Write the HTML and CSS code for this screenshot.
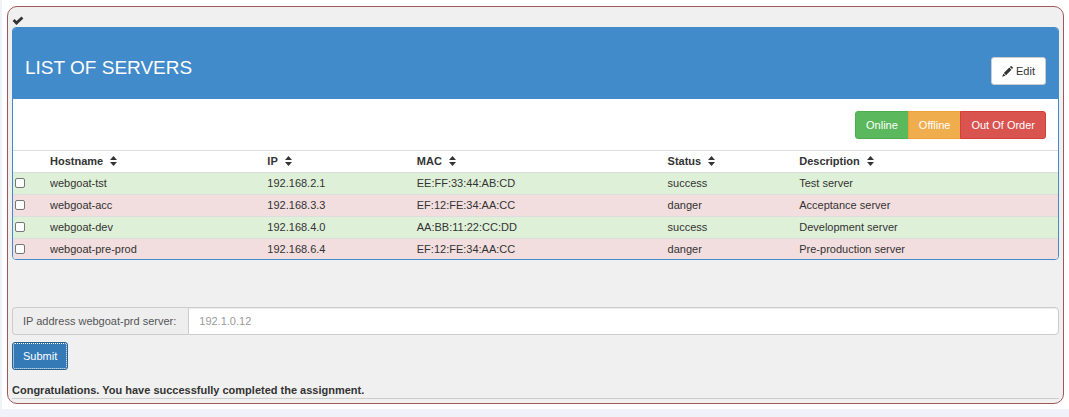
FILE: index.html
```html
<!DOCTYPE html>
<html lang="en">
<head>
<meta charset="utf-8">
<title>List of servers</title>
<link rel="stylesheet" href="styles.css">
</head>
<body>
<svg class="defs" aria-hidden="true">
  <symbol id="sort" viewBox="0 0 7 10"><path d="M3.5 0L7 4H0zM0 6h7L3.5 10z"/></symbol>
</svg>
<main class="page">
  <section class="attack">
    <div class="solved">
      <svg class="check" viewBox="0 0 12 9" aria-label="Solved"><path d="M1.6 4L4.5 7L10.4 1.5" fill="none" stroke="currentColor" stroke-width="2.8"/></svg>
    </div>
    <div class="panel">
      <header class="panel-header">
        <h1 class="title">LIST OF SERVERS</h1>
        <button class="btn btn-edit" type="button">
          <svg class="pencil" viewBox="0 0 12 12" aria-hidden="true"><path d="M8.6 1.1L9.4.4Q10.1-.1 10.7.4L11.6 1.3Q12.1 1.9 11.6 2.6L10.9 3.4zM7.9 1.7L10.3 4.1L4.4 10L2 7.6zM1.5 8.2L3.8 10.5L.2 11.8z"/></svg>
          Edit
        </button>
      </header>
      <div class="toolbar">
        <div class="group">
          <button class="btn online" type="button">Online</button>
          <button class="btn offline" type="button">Offline</button>
          <button class="btn broken" type="button">Out Of Order</button>
        </div>
      </div>
      <table class="servers">
        <colgroup><col class="c-check"><col class="c-host"><col class="c-ip"><col class="c-mac"><col class="c-status"><col></colgroup>
        <thead>
          <tr>
            <td></td>
            <th scope="col">Hostname <svg class="sort"><use href="#sort"/></svg></th>
            <th scope="col">IP <svg class="sort"><use href="#sort"/></svg></th>
            <th scope="col">MAC <svg class="sort"><use href="#sort"/></svg></th>
            <th scope="col">Status <svg class="sort"><use href="#sort"/></svg></th>
            <th scope="col">Description <svg class="sort"><use href="#sort"/></svg></th>
          </tr>
        </thead>
        <tbody>
          <tr class="success"><td><input class="tick" type="checkbox" aria-label="webgoat-tst"></td><td>webgoat-tst</td><td>192.168.2.1</td><td>EE:FF:33:44:AB:CD</td><td>success</td><td>Test server</td></tr>
          <tr class="danger"><td><input class="tick" type="checkbox" aria-label="webgoat-acc"></td><td>webgoat-acc</td><td>192.168.3.3</td><td>EF:12:FE:34:AA:CC</td><td>danger</td><td>Acceptance server</td></tr>
          <tr class="success"><td><input class="tick" type="checkbox" aria-label="webgoat-dev"></td><td>webgoat-dev</td><td>192.168.4.0</td><td>AA:BB:11:22:CC:DD</td><td>success</td><td>Development server</td></tr>
          <tr class="danger"><td><input class="tick" type="checkbox" aria-label="webgoat-pre-prod"></td><td>webgoat-pre-prod</td><td>192.168.6.4</td><td>EF:12:FE:34:AA:CC</td><td>danger</td><td>Pre-production server</td></tr>
        </tbody>
      </table>
    </div>
    <form class="answer">
      <div class="field">
        <label class="addon" for="ip">IP address webgoat-prd server:</label>
        <input class="ip" id="ip" type="text" placeholder="192.1.0.12">
      </div>
      <button class="btn submit" type="button">Submit</button>
    </form>
    <p class="feedback">Congratulations. You have successfully completed the assignment.</p>
  </section>
</main>
</body>
</html>
```

FILE: styles.css
```css
* { box-sizing: border-box; }

body {
  margin: 0;
  background: #f0f2f9;
  color: #333;
  font-family: "Liberation Sans", Arial, sans-serif;
  font-size: 11px;
  line-height: 16px;
}

.defs { position: absolute; width: 0; height: 0; }

.page {
  margin: 0 0 7px 2px;
  padding: 6px 5px 5px;
  background: #fff;
}

.attack {
  padding: 5px 4px 4px;
  border: 1px solid #a0575a;
  border-radius: 10px;
  background: #f0f0f0;
}

.solved { display: flex; align-items: center; height: 15px; padding-top: 2px; }
.check { width: 12px; height: 9px; }

.panel {
  overflow: hidden;
  border: 1px solid #428bca;
  border-radius: 4px;
  background: #fff;
}

.panel-header {
  display: flex;
  align-items: center;
  justify-content: space-between;
  padding: 28px 12px 13px;
  background: #428bca;
}

.title {
  margin: 0;
  padding-bottom: 6px;
  color: #fff;
  font-size: 19px;
  font-weight: 400;
  line-height: 24px;
}

.btn {
  padding: 5px 10px;
  border: 1px solid;
  border-radius: 3px;
  font: inherit;
  color: #fff;
}

.btn-edit {
  display: flex;
  align-items: center;
  gap: 3px;
  border-color: #ccc;
  background: #fff;
  color: #333;
}
.pencil { width: 11px; height: 11px; fill: currentColor; }

.toolbar { display: flex; justify-content: flex-end; padding: 12px 12px 11px; }
.group { display: flex; }
.group .btn + .btn { margin-left: -1px; border-top-left-radius: 0; border-bottom-left-radius: 0; }
.group .btn:not(:last-child) { border-top-right-radius: 0; border-bottom-right-radius: 0; }
.online { border-color: #4cae4c; background: #5cb85c; }
.offline { border-color: #eea236; background: #f0ad4e; }
.broken { border-color: #d43f3a; background: #d9534f; }

.servers { width: 100%; table-layout: fixed; border-collapse: collapse; }
.servers th, .servers td {
  padding: 2px 3px 3px;
  border-top: 1px solid #ddd;
  text-align: left;
  vertical-align: middle;
}
.servers tr:last-child td { padding-bottom: 2px; }
.c-check { width: 34px; }
.c-host { width: 20.8%; }
.c-ip { width: 14.3%; }
.c-mac { width: 24%; }
.c-status { width: 12.6%; }
.success { background: #dff0d8; }
.danger { background: #f2dede; }
.sort { width: 7px; height: 10px; margin-left: 4px; fill: currentColor; vertical-align: -1px; }
.tick {
  display: block;
  appearance: none;
  width: 10px;
  height: 10px;
  margin: 0 -1px;
  border: 1px solid #767676;
  border-radius: 2px;
  background: #fff;
}
.tick:checked { background: #337ab7; }

.answer { margin-top: 47px; }
.field { display: flex; margin-bottom: 7px; }
.addon {
  padding: 5px 12px 5px 10px;
  border: 1px solid #ccc;
  border-right: 0;
  border-radius: 4px 0 0 4px;
  background: #eee;
  color: #555;
}
.ip {
  flex: 1;
  min-width: 0;
  padding: 5px 10px;
  border: 1px solid #ccc;
  border-radius: 0 4px 4px 0;
  background: #fff;
  box-shadow: inset 0 1px 1px rgba(0, 0, 0, .075);
  color: #555;
  font: inherit;
}
.ip::placeholder { color: #999; }

.submit {
  border-color: #286090;
  background: #337ab7;
  outline: 1px dotted #fff;
  outline-offset: -2px;
}

.feedback {
  margin: 12px 0 0;
  border-bottom: 1px solid #ccc;
  font-weight: 700;
}
```
